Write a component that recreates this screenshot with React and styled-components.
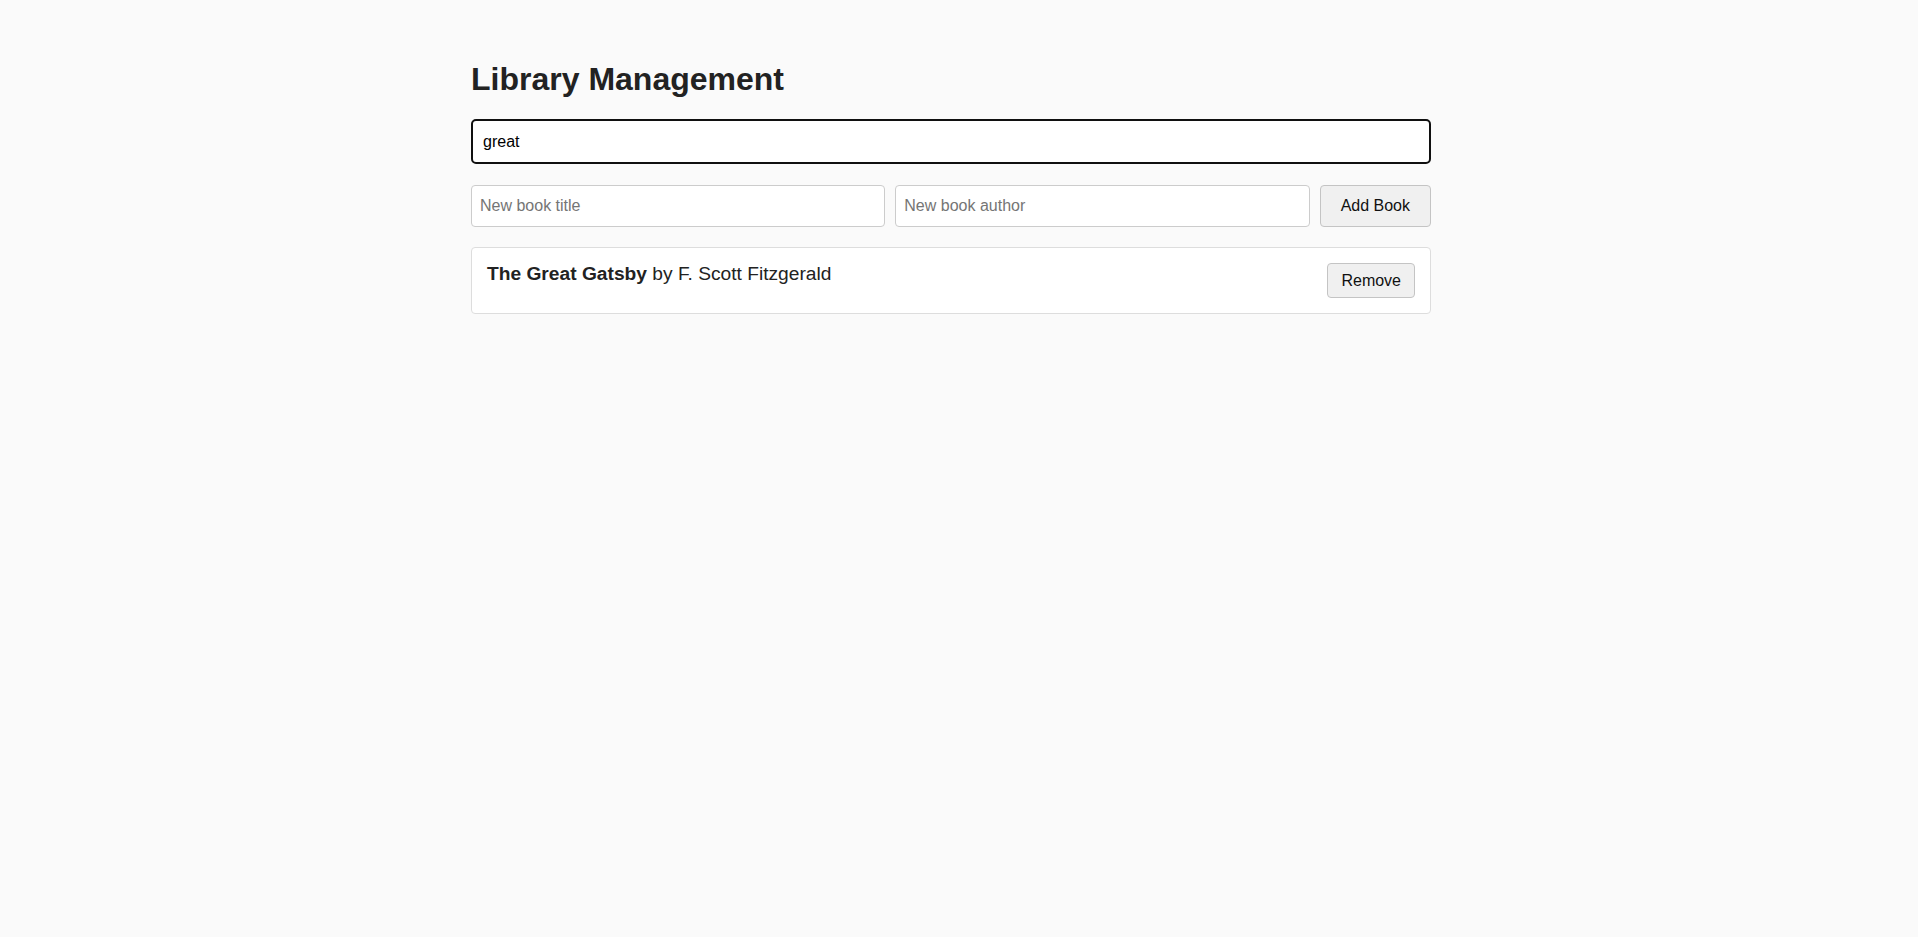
import React, { useState } from 'react'
import styled, { createGlobalStyle } from 'styled-components'

const GlobalStyle = createGlobalStyle`
   body {
      margin: 0;
      background: #fafafa;
      color: #222;
      font-family: "Liberation Sans", Arial, sans-serif;
   }
   * {
      box-sizing: border-box;
   }
`

const initialBooks = [
   { id: 1, title: 'The Great Gatsby', author: 'F. Scott Fitzgerald' },
   { id: 2, title: 'To Kill a Mockingbird', author: 'Harper Lee' },
   { id: 3, title: '1984', author: 'George Orwell' }
]

export default function App() {
   const [books, setBooks] = useState(initialBooks)
   const [query, setQuery] = useState('great')
   const [title, setTitle] = useState('')
   const [author, setAuthor] = useState('')

   const addBook = () => {
      if (!title.trim() || !author.trim()) return
      setBooks([...books, { id: Date.now(), title, author }])
      setTitle('')
      setAuthor('')
   }

   const removeBook = id => setBooks(books.filter(b => b.id !== id))

   const q = query.toLowerCase()
   const shown = books.filter(
      b => b.title.toLowerCase().includes(q) || b.author.toLowerCase().includes(q)
   )

   return (
      <Page>
         <GlobalStyle />
         <Container>
            <Title>Library Management</Title>
            <Search
               type="text"
               value={query}
               onChange={e => setQuery(e.target.value)}
               placeholder="Search books"
            />
            <AddRow>
               <Field
                  type="text"
                  value={title}
                  onChange={e => setTitle(e.target.value)}
                  placeholder="New book title"
               />
               <Field
                  type="text"
                  value={author}
                  onChange={e => setAuthor(e.target.value)}
                  placeholder="New book author"
               />
               <Button $size="large" onClick={addBook}>Add Book</Button>
            </AddRow>
            <BookList>
               {shown.map(book => (
                  <BookItem key={book.id}>
                     <BookText>
                        <strong>{book.title}</strong> by {book.author}
                     </BookText>
                     <Button onClick={() => removeBook(book.id)}>Remove</Button>
                  </BookItem>
               ))}
            </BookList>
         </Container>
      </Page>
   )
}

const Page = styled.div`
   min-height: 100vh;
   padding: 40px 36px 0 20px;
   background: #fafafa;
`

const Container = styled.div`
   max-width: 960px;
   margin: 0 auto;
`

const Title = styled.h1`
   font-size: 32px;
   font-weight: bold;
   line-height: normal;
   margin: 21px 0 21px;
   color: #222;
`

const Search = styled.input`
   display: block;
   width: 100%;
   height: 45px;
   padding: 0 10px;
   margin-bottom: 21px;
   border: 2px solid #101010;
   border-radius: 5px;
   background: #fff;
   color: #000;
   font: 16px "Liberation Sans", Arial, sans-serif;
   outline: none;
`

const AddRow = styled.div`
   display: flex;
   gap: 10px;
   margin-bottom: 20px;
`

const Field = styled.input`
   flex: 1;
   min-width: 0;
   height: 42px;
   padding: 0 8px;
   border: 1px solid #ccc;
   border-radius: 4px;
   background: #fff;
   color: #222;
   font: 16px "Liberation Sans", Arial, sans-serif;
   outline: none;

   &::placeholder {
      color: #757575;
   }
`

const Button = styled.button`
   flex: none;
   height: ${p => (p.$size === 'large' ? '42px' : '35px')};
   padding: ${p => (p.$size === 'large' ? '0 20px' : '0 13px')};
   border: 1px solid #c4c4c4;
   border-radius: 4px;
   background: #f0f0f0;
   color: #111;
   font: 16px "Liberation Sans", Arial, sans-serif;
   cursor: pointer;
`

const BookList = styled.ul`
   list-style: none;
   margin: 0;
   padding: 0;
`

const BookItem = styled.li`
   display: flex;
   justify-content: space-between;
   align-items: flex-start;
   padding: 15px;
   margin-bottom: 10px;
   border: 1px solid #ddd;
   border-radius: 4px;
   background: #fff;
`

const BookText = styled.span`
   font-size: 19.2px;
   color: #222;
`
